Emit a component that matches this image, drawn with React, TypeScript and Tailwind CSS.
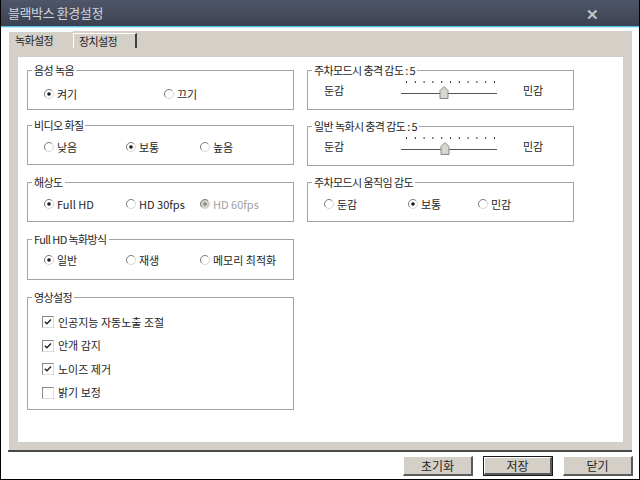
import React from "react";

function Radio({ checked = false, disabled = false }: { checked?: boolean; disabled?: boolean }) {
  return (
    <svg width="12" height="12" viewBox="0 0 12 12" className="shrink-0">
      <circle cx="6" cy="6" r="4.5" fill={disabled ? "#d4d0c8" : "#ffffff"} />
      <path d="M2.8 9.2 A4.5 4.5 0 0 1 9.2 2.8" fill="none" stroke="#7a7a7a" strokeWidth="1" />
      <path d="M9.2 2.8 A4.5 4.5 0 0 1 2.8 9.2" fill="none" stroke="#d8d8d8" strokeWidth="1" />
      {checked && <circle cx="6" cy="6" r="1.8" fill={disabled ? "#8a8a8a" : "#1a1a1a"} />}
    </svg>
  );
}

function Check({ checked = false }: { checked?: boolean }) {
  return (
    <svg width="12" height="12" viewBox="0 0 12 12" className="shrink-0">
      <rect x="0.5" y="0.5" width="11" height="11" fill="#ffffff" stroke="#8a8a8a" />
      <path d="M0.5 11.5 H11.5 V0.5" fill="none" stroke="#dcdcdc" />
      {checked && <path d="M2.8 5.7 L4.9 7.8 L9 3.6" fill="none" stroke="#222222" strokeWidth="1.4" />}
    </svg>
  );
}

function Slider({ pos }: { pos: number }) {
  const ticks = Array.from({ length: 11 }, (_, i) => 7 + i * 8.8);
  return (
    <svg width="100" height="20" viewBox="0 0 100 20" className="shrink-0">
      {ticks.map((x) => (
        <rect key={x} x={x} y="1" width="1" height="2" fill="#333333" />
      ))}
      <rect x="2" y="13" width="96" height="1" fill="#555555" />
      <rect x="2" y="14" width="96" height="1" fill="#ffffff" />
      <path
        d={`M${pos - 4} 18.5 V10.5 L${pos} 6.5 L${pos + 4} 10.5 V18.5 Z`}
        fill="#d9d6cf"
        stroke="#8a8a8a"
      />
    </svg>
  );
}

function Group({ title, cls, children }: { title: string; cls: string; children: React.ReactNode }) {
  return (
    <fieldset className={`min-w-0 w-full border border-[#a3a3a3] ${cls} p-0`}>
      <legend className="ml-[4px] px-[2px] leading-[14px] text-[11px] tracking-[-0.6px]">{title}</legend>
      {children}
    </fieldset>
  );
}

function Opt({ label, w, checked, disabled }: { label: string; w: string; checked?: boolean; disabled?: boolean }) {
  return (
    <div className={`${w} shrink-0 flex items-center gap-[2px]`}>
      <Radio checked={checked} disabled={disabled} />
      <span className={disabled ? "text-[#a0a0a0]" : ""}>{label}</span>
    </div>
  );
}

function Btn({ label, primary }: { label: string; primary?: boolean }) {
  return (
    <div className={`w-[70px] h-[20px] ${primary ? "border border-[#1a1a1a]" : ""}`}>
      <div className="h-full flex items-center justify-center bg-[#d4d0c8] border-t border-l border-t-white border-l-white border-b-2 border-r-2 border-b-[#5a5a5a] border-r-[#5a5a5a] text-[12px]">
        {label}
      </div>
    </div>
  );
}

export default function App() {
  return (
    <div className="w-[640px] h-[480px] bg-white border-l border-r border-b border-black flex flex-col font-['Noto_Sans_CJK_KR','Liberation_Sans',sans-serif] text-[#1e1e1e] text-[11px] overflow-hidden">
      {/* title bar */}
      <div className="h-[26px] shrink-0 bg-gradient-to-b from-[#50566a] to-[#3c4151] flex items-center justify-between pl-[7px] pr-[40px]">
        <span className="text-[13px] text-[#cfd3db] tracking-[-0.4px]">블랙박스 환경설정</span>
        <span className="text-[15px] leading-none font-bold text-[#c0c4cc]">✕</span>
      </div>
      <div className="h-[1px] shrink-0 bg-[#4fc3ee]" />
      <div className="h-[1px] shrink-0 bg-[#c6ecfa]" />
      <div className="h-[3px] shrink-0" />

      {/* tab control */}
      <div className="mx-[7px] h-[421px] shrink-0 flex flex-col bg-[#d4d0c8] border-b-2 border-[#4a4a4a]">
        <div className="h-[17px] shrink-0 flex items-end">
          <div className="w-[65px] h-[17px] border-t border-l border-white pl-[6px] flex items-center text-[11px] tracking-[-0.6px]">
            녹화설정
          </div>
          <div className="w-[64px] h-[15px] border-t border-l border-white border-r-2 border-r-[#404040] pl-[5px] flex items-center text-[11px] tracking-[-0.6px]">
            장치설정
          </div>
        </div>
        <div className="flex-1 px-[8px] pt-[8px] pb-[7px] border-l border-white">
          <div className="h-full bg-white border border-[#cfcfcf] pl-[9px] pt-[6px] grid grid-cols-[267px_267px] gap-x-[13px] content-start">
            {/* left column */}
            <div className="flex flex-col">
              <Group title="음성 녹음" cls="h-[47px]">
                <div className="flex items-center pt-[9px] pl-[15px]">
                  <Opt label="켜기" w="w-[120px]" checked />
                  <Opt label="끄기" w="w-[80px]" />
                </div>
              </Group>
              <Group title="비디오 화질" cls="h-[47px] mt-[8px]">
                <div className="flex items-center pt-[7px] pl-[15px]">
                  <Opt label="낮음" w="w-[82px]" />
                  <Opt label="보통" w="w-[74px]" checked />
                  <Opt label="높음" w="w-[70px]" />
                </div>
              </Group>
              <Group title="해상도" cls="h-[47px] mt-[10px]">
                <div className="flex items-center pt-[7px] pl-[15px]">
                  <Opt label="Full HD" w="w-[82px]" checked />
                  <Opt label="HD 30fps" w="w-[74px]" />
                  <Opt label="HD 60fps" w="w-[70px]" checked disabled />
                </div>
              </Group>
              <Group title="Full HD 녹화방식" cls="h-[48px] mt-[10px]">
                <div className="flex items-center pt-[6px] pl-[15px]">
                  <Opt label="일반" w="w-[82px]" checked />
                  <Opt label="재생" w="w-[74px]" />
                  <Opt label="메모리 최적화" w="w-[90px]" />
                </div>
              </Group>
              <Group title="영상설정" cls="h-[120px] mt-[10px]">
                <div className="flex flex-col pt-[11px] pl-[14px] gap-[9.5px]">
                  {[
                    ["인공지능 자동노출 조절", true],
                    ["안개 감지", true],
                    ["노이즈 제거", true],
                    ["밝기 보정", false],
                  ].map(([label, on]) => (
                    <div key={label as string} className="flex items-center gap-[4px] h-[14px]">
                      <Check checked={on as boolean} />
                      <span>{label as string}</span>
                    </div>
                  ))}
                </div>
              </Group>
            </div>

            {/* right column */}
            <div className="flex flex-col">
              <Group title="주차모드시 충격 감도 : 5" cls="h-[47px]">
                <div className="flex items-center pt-[3px] pl-[16px]">
                  <span className="w-[75px]">둔감</span>
                  <Slider pos={45} />
                  <span className="ml-[24px]">민감</span>
                </div>
              </Group>
              <Group title="일반 녹화시 충격 감도 : 5" cls="h-[47px] mt-[9px]">
                <div className="flex items-center pt-[3px] pl-[16px]">
                  <span className="w-[75px]">둔감</span>
                  <Slider pos={46} />
                  <span className="ml-[24px]">민감</span>
                </div>
              </Group>
              <Group title="주차모드시 움직임 감도" cls="h-[47px] mt-[9px]">
                <div className="flex items-center pt-[7px] pl-[15px]">
                  <Opt label="둔감" w="w-[84px]" />
                  <Opt label="보통" w="w-[70px]" checked />
                  <Opt label="민감" w="w-[70px]" />
                </div>
              </Group>
            </div>
          </div>
        </div>
      </div>

      {/* buttons */}
      <div className="flex-1 flex justify-end items-start pt-[4px] pr-[6px] gap-[10px]">
        <Btn label="초기화" />
        <Btn label="저장" primary />
        <Btn label="닫기" />
      </div>
    </div>
  );
}
